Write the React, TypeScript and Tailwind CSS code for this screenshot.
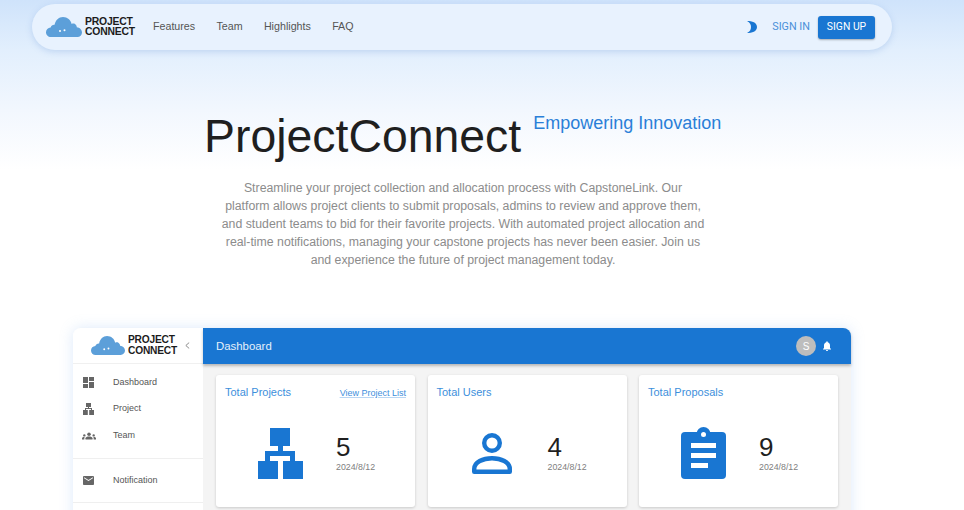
import type { ReactNode } from "react";

const sans = { fontFamily: '"Liberation Sans", Arial, sans-serif' };

function Cloud({ className }: { className: string }) {
  return (
    <svg viewBox="0 0 36 20" className={className}>
      <path
        d="M5 20C2 20 0 17.8 0 15.2 0 12.4 2 10.6 4.6 10.4 5.2 8.6 6.8 7.6 8.6 7.8 9.4 3.2 12.8 0 17 0c4.4 0 7.8 3 8.6 7 1-.6 2.4-.6 3.4 0 1.2.8 1.8 2 1.8 3.2C33.8 10.6 36 12.6 36 15.4 36 18 34 20 31.4 20Z"
        fill="#5c9fd9"
      />
      <circle cx="14" cy="14" r="1" fill="#fff" />
      <circle cx="18.5" cy="13.2" r="1" fill="#fff" />
    </svg>
  );
}

function Logo({ cloud, text }: { cloud: string; text: string }) {
  return (
    <div className="flex items-center">
      <Cloud className={cloud} />
      <div className={`ml-[3px] font-bold uppercase text-[#1c1c1c] tracking-[-0.2px] ${text}`}>
        <div>Project</div>
        <div>Connect</div>
      </div>
    </div>
  );
}

function ProjectIcon() {
  return (
    <svg viewBox="0 0 45 51" className="w-[45px] h-[51px]" fill="#1976d2">
      <rect x="12" y="0" width="20" height="18" />
      <rect x="20" y="18" width="5" height="5" />
      <path d="M7 23h30v10h-5v-5H12v5H7Z" />
      <rect x="0" y="33" width="20" height="18" />
      <rect x="25" y="33" width="20" height="18" />
    </svg>
  );
}

function UserIcon() {
  return (
    <svg viewBox="0 0 40 41" className="w-[40px] h-[41px]" fill="none" stroke="#1976d2">
      <circle cx="20" cy="10" r="7.8" strokeWidth="4.4" />
      <path d="M2.2 38.800V36C2.200 29 11 25.200 20 25.200S37.800 29 37.800 36v2.800Z" strokeWidth="4.400" strokeLinejoin="round" />
    </svg>
  );
}

function ClipboardIcon() {
  return (
    <svg viewBox="0 0 45 52" className="w-[45px] h-[52px]" fill="#1976d2">
      <rect x="0" y="5" width="45" height="47" rx="4" />
      <circle cx="22.5" cy="7" r="7" />
      <circle cx="22.500" cy="7.500" r="2.500" fill="#fff" />
      <rect x="10" y="16" width="25" height="5" fill="#fff" />
      <rect x="10" y="26" width="25" height="5" fill="#fff" />
      <rect x="10" y="36" width="17" height="5" fill="#fff" />
    </svg>
  );
}

function StatCard({
  title,
  value,
  icon,
  action,
}: {
  title: string;
  value: string;
  icon: ReactNode;
  action?: string;
}) {
  return (
    <div className="flex-1 h-[132px] bg-white rounded-[3px] shadow-[0_1px_3px_rgba(0,0,0,0.18)] px-[9px] pt-[10px]">
      <div className="flex items-start justify-between h-[42px]">
        <span className="text-[11px] leading-[14px] text-[#3d8fdc]">{title}</span>
        {action && (
          <span className="mt-[2px] text-[9px] leading-[12px] text-[#3d8fdc] underline decoration-[#b9d6f3]">
            {action}
          </span>
        )}
      </div>
      <div className="flex items-center justify-center gap-[33px] pl-[13px]">
        <div className="w-[45px] h-[52px] flex items-center justify-center">{icon}</div>
        <div className="w-[50px]">
          <div className="text-[26px] leading-[28px] text-[#1f1f1f]">{value}</div>
          <div className="text-[8.8px] leading-[12px] text-[#808080]">2024/8/12</div>
        </div>
      </div>
    </div>
  );
}

function SideItem({ icon, label }: { icon: ReactNode; label: string }) {
  return (
    <div className="flex items-center h-[26.7px] pl-[10px]">
      <div className="w-[30px] flex justify-start">{icon}</div>
      <span className="text-[9px] text-[#555]">{label}</span>
    </div>
  );
}

const navItems = ["Features", "Team", "Highlights", "FAQ"];

export default function App() {
  return (
    <div
      className="h-[510px] w-[964px] overflow-hidden bg-[linear-gradient(180deg,#cfe3fb_0px,#e2effd_50px,#f2f7fe_110px,#ffffff_170px)]"
      style={sans}
    >
      <div className="pt-[4px] pl-[32px] w-[892px]">
        <nav className="flex items-center h-[46px] w-[860px] rounded-[23px] bg-[#e8f2fe] shadow-[0_2px_6px_rgba(90,140,210,0.25)] pl-[14px] pr-[17px]">
          <Logo cloud="w-[36px] h-[20px]" text="text-[10.4px] leading-[10.5px]" />
          <div className="flex items-center ml-[18px] gap-[21.3px] text-[10.7px] leading-[12px] mb-[2px] text-[#555]">
            {navItems.map((item) => (
              <span key={item}>{item}</span>
            ))}
          </div>
          <svg viewBox="0 0 10 12" className="ml-auto w-[10px] h-[12px]">
            <path d="M0 0C5 0 10 1.500 10 6S5 12 0 12C3 10.500 4 8.500 4 6S3 1.500 0 0Z" fill="#1976d2" />
          </svg>
          <span className="ml-[15px] text-[10.8px] text-[#4a90d9]" style={{ fontFamily: "Roboto, sans-serif" }}>
            SIGN IN
          </span>
          <button
            className="ml-[8px] h-[23px] w-[57px] rounded-[3px] bg-[#1976d2] text-white text-[10.4px] font-normal shadow-[0_1px_2px_rgba(0,0,0,0.3)]"
            style={{ fontFamily: "Roboto, sans-serif" }}
          >
            SIGN UP
          </button>
        </nav>
      </div>

      <div className="flex items-start pl-[204px] mt-[59px]">
        <h1 className="text-[46.4px] leading-[54px] font-normal text-[#1f1f1f]">ProjectConnect</h1>
        <span className="ml-[12px] mt-[2px] text-[18px] leading-[24px] text-[#2a7fd8]">Empowering Innovation</span>
      </div>

      <p className="mt-[16px] ml-[210px] w-[506px] text-center text-[12.3px] leading-[18px] text-[#8c8c8c]">
        Streamline your project collection and allocation process with CapstoneLink. Our
        <br />
        platform allows project clients to submit proposals, admins to review and approve them,
        <br />
        and student teams to bid for their favorite projects. With automated project allocation and
        <br />
        real-time notifications, managing your capstone projects has never been easier. Join us
        <br />
        and experience the future of project management today.
      </p>

      <div className="mt-[59px] ml-[73px] w-[778px] h-[200px] flex rounded-t-[8px] shadow-[0_0_14px_rgba(120,170,240,0.25)]">
        <aside className="w-[130px] shrink-0 bg-white rounded-tl-[8px] shadow-[1px_0_1px_rgba(0,0,0,0.06)]">
          <div className="flex items-center h-[36px] pl-[18px] border-b border-[#f0f0f0]">
            <Logo cloud="w-[34px] h-[19px]" text="text-[10.2px] leading-[10.5px]" />
            <svg viewBox="0 0 6 8" className="ml-[8px] w-[5px] h-[7px]" fill="none" stroke="#777" strokeWidth="1">
              <path d="M5 .5 1 4l4 3.500" />
            </svg>
          </div>
          <div className="pt-[5px] pb-[9px] border-b border-[#efefef]">
            <SideItem
              label="Dashboard"
              icon={
                <svg viewBox="0 0 11 11" className="w-[11px] h-[11px]" fill="#666">
                  <path d="M0 0h5v6H0ZM6 0h5v4H6ZM6 5h5v6H6ZM0 7h5v4H0Z" />
                </svg>
              }
            />
            <SideItem
              label="Project"
              icon={
                <svg viewBox="0 0 11 12" className="w-[11px] h-[12px]" fill="#666">
                  <path d="M3 0h5v4H6v1h3v2h2v5H6.200V7H8V6H3v1h1.800v5H0V7h2V5h3V4H3Z" />
                </svg>
              }
            />
            <SideItem
              label="Team"
              icon={
                <svg viewBox="0 0 24 24" className="w-[14px] h-[14px] -ml-[1px]" fill="#666">
                  <circle cx="12" cy="9" r="3" />
                  <path d="M6 18v-2c0-2 3-3 6-3s6 1 6 3v2Z" />
                  <circle cx="4" cy="11" r="2" />
                  <path d="M0 18v-2c0-1.500 2-2.400 4.500-2.300C4 14.500 4 15.500 4 18Z" />
                  <circle cx="20" cy="11" r="2" />
                  <path d="M24 18v-2c0-1.500-2-2.400-4.500-2.300.5.8.5 1.800.5 4.300Z" />
                </svg>
              }
            />
          </div>
          <div className="pt-[8px] pb-[8px] border-b border-[#efefef]">
            <SideItem
              label="Notification"
              icon={
                <svg viewBox="2 4 20 16" className="w-[11px] h-[9px]" fill="#666" preserveAspectRatio="none">
                  <path d="M20 4H4c-1.100 0-1.990.9-1.990 2L2 18c0 1.100.9 2 2 2h16c1.100 0 2-.9 2-2V6c0-1.100-.9-2-2-2zm0 4l-8 5-8-5V6l8 5 8-5v2z" />
                </svg>
              }
            />
          </div>
        </aside>

        <div className="flex-1 bg-[#f4f4f4] rounded-tr-[8px]">
          <header className="flex items-center h-[36px] bg-[#1976d2] rounded-tr-[8px] pl-[13px] pr-[18px] shadow-[0_2px_3px_rgba(0,0,0,0.25)]">
            <span className="text-[11.4px] mt-[1px] text-[#e6f0fa]">Dashboard</span>
            <div className="ml-auto w-[20px] h-[20px] rounded-full bg-[#bdbdbd] text-white text-[10px] flex items-center justify-center">
              S
            </div>
            <svg viewBox="0 0 24 24" className="ml-[5px] w-[12px] h-[12px]" fill="#fff">
              <path d="M12 22c1.100 0 2-.9 2-2h-4c0 1.100.89 2 2 2zm6-6v-5c0-3.070-1.640-5.640-4.500-6.320V4c0-.83-.67-1.500-1.500-1.500s-1.500.67-1.500 1.500v.68C7.630 5.360 6 7.920 6 11v5l-2 2v1h16v-1l-2-2z" />
            </svg>
          </header>
          <div className="flex gap-[12.5px] pt-[11px] pl-[13px] pr-[13px]">
            <StatCard title="Total Projects" value="5" action="View Project List" icon={<ProjectIcon />} />
            <StatCard title="Total Users" value="4" icon={<UserIcon />} />
            <StatCard title="Total Proposals" value="9" icon={<ClipboardIcon />} />
          </div>
        </div>
      </div>
    </div>
  );
}
